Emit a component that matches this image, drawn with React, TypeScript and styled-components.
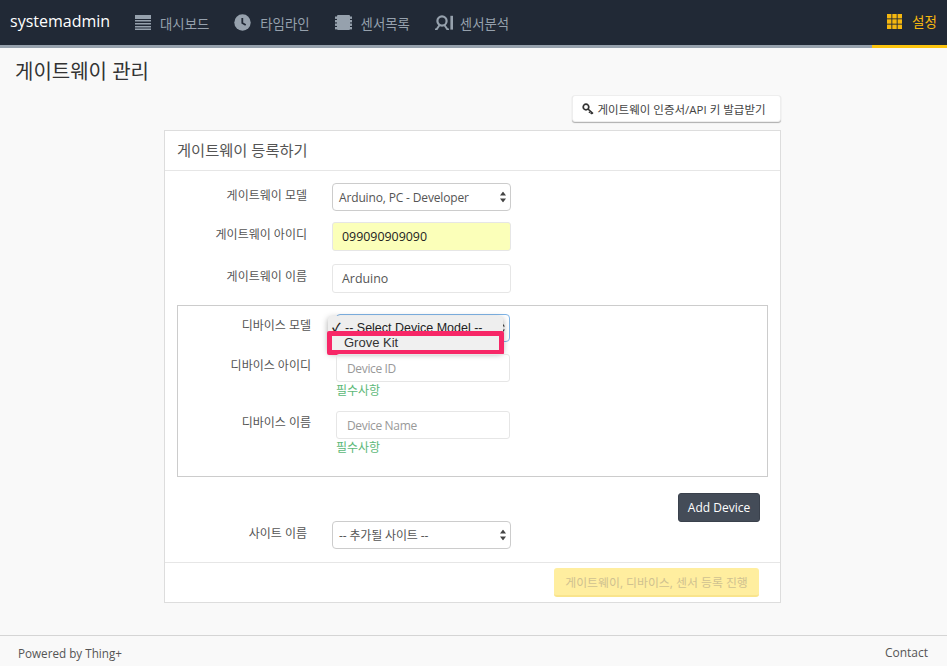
import React from "react";
import styled, { createGlobalStyle } from "styled-components";

const FONT = `"Open Sans", "Noto Sans CJK KR", sans-serif`;
const POPUP_FONT = `"Liberation Sans", "Noto Sans CJK KR", sans-serif`;

const GlobalStyle = createGlobalStyle`
  html, body { margin: 0; padding: 0; }
  body {
    background: #f9f9f9;
    font-family: ${FONT};
    color: #333;
    height: 666px;
    overflow: hidden;
  }
  * { box-sizing: border-box; }
`;

const DashIcon = () => (
  <svg width="16" height="15" viewBox="0 0 16 15" fill="currentColor">
    <rect x="0" y="0" width="16" height="4" />
    <rect x="0" y="5" width="16" height="1.5" />
    <rect x="0" y="8" width="16" height="1.5" />
    <rect x="0" y="11" width="16" height="1.5" />
    <rect x="0" y="13.5" width="16" height="1.5" />
  </svg>
);

const ClockIcon = () => (
  <svg width="17" height="17" viewBox="0 0 17 17">
    <circle cx="8.5" cy="8.5" r="8.2" fill="currentColor" />
    <path d="M8.3 4v5l3.4 2" fill="none" stroke="#212936" strokeWidth="1.8" />
  </svg>
);

const ChipIcon = () => (
  <svg width="17" height="15" viewBox="0 0 17 15" fill="currentColor">
    <rect x="2" y="0" width="13" height="15" rx="1" />
    <rect x="0" y="1.5" width="2" height="2.4" />
    <rect x="0" y="5" width="2" height="2.4" />
    <rect x="0" y="8.5" width="2" height="2.4" />
    <rect x="0" y="12" width="2" height="2.4" />
    <rect x="15" y="1.5" width="2" height="2.4" />
    <rect x="15" y="5" width="2" height="2.4" />
    <rect x="15" y="8.5" width="2" height="2.4" />
    <rect x="15" y="12" width="2" height="2.4" />
  </svg>
);

const AnalyticsSvg = styled.svg`
  margin-right: -2px;
`;

const AnalyticsIcon = () => (
  <AnalyticsSvg width="18" height="15" viewBox="0 0 18 15" fill="none" stroke="currentColor">
    <circle cx="7" cy="6" r="4.6" strokeWidth="2.2" />
    <path d="M4.6 10 1.6 14.4H0M9.4 10l3 4.4H14" strokeWidth="1.9" />
    <rect x="15.4" y="0.8" width="2.6" height="13.8" fill="currentColor" stroke="none" />
  </AnalyticsSvg>
);

const GridIcon = () => (
  <svg width="15" height="15" viewBox="0 0 15 15" fill="currentColor">
    {[0, 5.3, 10.6].flatMap((y) =>
      [0, 5.3, 10.6].map((x) => (
        <rect key={`${x}-${y}`} x={x} y={y} width="4.4" height="4.4" />
      ))
    )}
  </svg>
);

const KeyIcon = () => (
  <svg width="12" height="12" viewBox="0 0 12 12" fill="none" stroke="#333">
    <circle cx="4" cy="4" r="2.8" strokeWidth="1.7" />
    <path d="M6 6l5 4.6M8.4 8.2 7 9.7M10 9.6 8.8 11" strokeWidth="1.6" />
  </svg>
);

const SelectArrows = () => (
  <ArrowsSvg width="6" height="11" viewBox="0 0 6 11" fill="currentColor">
    <path d="M3 0l3 4H0zM3 11 0 7h6z" />
  </ArrowsSvg>
);

const ArrowsSvg = styled.svg`
  position: absolute;
  right: 4px;
  top: 50%;
  transform: translateY(-50%);
  color: #444;
`;

const NAV_ITEMS = [
  { label: "대시보드", icon: <DashIcon /> },
  { label: "타임라인", icon: <ClockIcon /> },
  { label: "센서목록", icon: <ChipIcon /> },
  { label: "센서분석", icon: <AnalyticsIcon /> },
];

export default function App() {
  return (
    <Page>
      <GlobalStyle />
      <NavBar>
        <Brand>systemadmin</Brand>
        <NavList>
          {NAV_ITEMS.map((item) => (
            <NavItem key={item.label}>
              {item.icon}
              <span>{item.label}</span>
            </NavItem>
          ))}
        </NavList>
        <SettingsItem>
          <GridIcon />
          <span>설정</span>
        </SettingsItem>
      </NavBar>

      <Content>
        <PageTitle>게이트웨이 관리</PageTitle>
        <Toolbar>
          <KeyButton>
            <KeyIcon />
            게이트웨이 인증서/API 키 발급받기
          </KeyButton>
        </Toolbar>

        <Panel>
          <PanelHeading>게이트웨이 등록하기</PanelHeading>
          <PanelBody>
            <Row $height={39}>
              <RowLabel>게이트웨이 모델</RowLabel>
              <SelectBox>
                Arduino, PC - Developer
                <SelectArrows />
              </SelectBox>
            </Row>
            <Row $height={42}>
              <RowLabel>게이트웨이 아이디</RowLabel>
              <TextBox $fill="#fbffb9" $color="#222">099090909090</TextBox>
            </Row>
            <Row $height={41}>
              <RowLabel>게이트웨이 이름</RowLabel>
              <TextBox $color="#555">Arduino</TextBox>
            </Row>

            <DeviceBox>
              <DeviceRow $height={40}>
                <DeviceLabel>디바이스 모델</DeviceLabel>
                <DeviceField>
                  <FocusedSelect>
                    <SelectArrows />
                  </FocusedSelect>
                  <Popup>
                    <PopupOption>
                      <Check>✓</Check>-- Select Device Model --
                    </PopupOption>
                    <Highlight>
                      <HighlightInner>Grove Kit</HighlightInner>
                    </Highlight>
                  </Popup>
                </DeviceField>
              </DeviceRow>
              <DeviceRow $height={57}>
                <DeviceLabel>디바이스 아이디</DeviceLabel>
                <DeviceField>
                  <DeviceInput>Device ID</DeviceInput>
                  <Required>필수사항</Required>
                </DeviceField>
              </DeviceRow>
              <DeviceRow $height={57}>
                <DeviceLabel>디바이스 이름</DeviceLabel>
                <DeviceField>
                  <DeviceInput>Device Name</DeviceInput>
                  <Required>필수사항</Required>
                </DeviceField>
              </DeviceRow>
            </DeviceBox>

            <AddRow>
              <AddButton>Add Device</AddButton>
            </AddRow>

            <Row $height={40}>
              <RowLabel>사이트 이름</RowLabel>
              <SelectBox>
                -- 추가될 사이트 --
                <SelectArrows />
              </SelectBox>
            </Row>
          </PanelBody>
          <PanelFooter>
            <SubmitButton>게이트웨이, 디바이스, 센서 등록 진행</SubmitButton>
          </PanelFooter>
        </Panel>
      </Content>

      <Footer>
        <PoweredBy>Powered by Thing+</PoweredBy>
        <span>Contact</span>
      </Footer>
    </Page>
  );
}

const Page = styled.div`
  width: 947px;
  height: 666px;
  display: flex;
  flex-direction: column;
`;

const NavBar = styled.nav`
  height: 48px;
  flex: none;
  display: flex;
  align-items: stretch;
  background: #212936;
  border-bottom: 3px solid #96a1ad;
  padding-left: 10px;
`;

const Brand = styled.div`
  font-size: 16px;
  line-height: 43px;
  color: #fff;
  width: 125px;
`;

const NavList = styled.div`
  display: flex;
  gap: 25px;
  flex: 1;
`;

const NavItem = styled.div`
  display: flex;
  align-items: center;
  gap: 9px;
  color: #96a1ad;
  font-size: 13.4px;
  height: 45px;
`;

const SettingsItem = styled.div`
  display: flex;
  align-items: center;
  gap: 10px;
  width: 75px;
  height: 48px;
  padding: 0 0 3px 15px;
  color: #f5b70f;
  font-size: 13.5px;
  border-bottom: 3px solid #fcc40f;
`;

const Content = styled.main`
  flex: 1;
  display: flex;
  flex-direction: column;
  padding-left: 164px;
`;

const PageTitle = styled.h1`
  margin: 10px 0 0 -149px;
  height: 37px;
  font-size: 20px;
  line-height: 28px;
  font-weight: 400;
  color: #333;
`;

const Toolbar = styled.div`
  width: 617px;
  height: 35px;
  display: flex;
  justify-content: flex-end;
`;

const KeyButton = styled.div`
  width: 209px;
  height: 27px;
  display: flex;
  align-items: center;
  justify-content: center;
  gap: 3px;
  padding-right: 5px;
  background: #fff;
  border-radius: 3px;
  box-shadow: 0 1px 1px rgba(0, 0, 0, 0.3);
  border: 1px solid #eee;
  font-size: 11.5px;
  color: #444;
`;

const Panel = styled.section`
  width: 617px;
  height: 473px;
  background: #fff;
  border: 1px solid #ddd;
  display: flex;
  flex-direction: column;
`;

const PanelHeading = styled.div`
  height: 40px;
  flex: none;
  padding-left: 12px;
  border-bottom: 1px solid #e6e6e6;
  font-size: 15.3px;
  line-height: 39px;
  color: #555;
`;

const PanelBody = styled.div`
  flex: 1;
  padding: 12px 12px 0;
`;

const Row = styled.div<{ $height: number }>`
  display: flex;
  height: ${(p) => p.$height}px;
  align-items: flex-start;
`;

const RowLabel = styled.div`
  width: 130px;
  text-align: right;
  font-size: 12px;
  line-height: 26px;
  color: #555;
  margin-right: 25px;
`;

const SelectBox = styled.div`
  position: relative;
  width: 179px;
  height: 28px;
  padding-left: 6px;
  background: #fff;
  border: 1px solid #ccc;
  border-radius: 4px;
  font-size: 12px;
  letter-spacing: -0.15px;
  line-height: 27px;
  color: #555;
`;

const TextBox = styled.div<{ $fill?: string; $color: string }>`
  width: 179px;
  height: 29px;
  padding-left: 9px;
  background: ${(p) => p.$fill || "#fff"};
  border: 1px solid #e6e6e6;
  border-radius: 3px;
  font-size: 12.4px;
  line-height: 28px;
  color: ${(p) => p.$color};
`;

const DeviceBox = styled.div`
  width: 591px;
  height: 172px;
  border: 1px solid #ccc;
  padding-top: 8px;
`;

const DeviceRow = styled.div<{ $height: number }>`
  display: flex;
  height: ${(p) => p.$height}px;
`;

const DeviceLabel = styled.div`
  width: 133px;
  text-align: right;
  font-size: 12px;
  line-height: 24px;
  color: #555;
  margin-right: 25px;
`;

const DeviceField = styled.div`
  position: relative;
  width: 174px;
`;

const FocusedSelect = styled.div`
  position: relative;
  width: 174px;
  height: 28px;
  border: 1px solid #7fb4e6;
  border-radius: 4px;
  background: #fff;
`;

const Popup = styled.div`
  position: absolute;
  left: -8px;
  top: 2px;
  width: 175px;
  height: 36px;
  background: #eee;
  border-radius: 4px;
  box-shadow: 0 2px 6px rgba(0, 0, 0, 0.35);
  font-family: ${POPUP_FONT};
  font-size: 12.5px;
  color: #222;
`;

const PopupOption = styled.div`
  display: flex;
  height: 18px;
  line-height: 24px;
  overflow: hidden;
  padding-left: 4px;
`;

const Check = styled.span`
  width: 13px;
  flex: none;
  font-size: 12px;
  font-weight: 700;
`;

const Highlight = styled.div`
  position: absolute;
  left: -1px;
  top: 15px;
  width: 177px;
  height: 24px;
  border: 5px solid #f72767;
  border-radius: 2px;
`;

const HighlightInner = styled.div`
  height: 14px;
  padding-left: 12px;
  background: #f0f0f0;
  font-size: 13px;
  line-height: 14px;
  color: #333;
`;

const DeviceInput = styled.div`
  width: 174px;
  height: 28px;
  padding-left: 10px;
  border: 1px solid #e6e6e6;
  border-radius: 3px;
  font-size: 12px;
  letter-spacing: -0.35px;
  line-height: 27px;
  color: #999;
`;

const Required = styled.div`
  font-size: 12px;
  line-height: 18px;
  color: #5cb878;
`;

const AddRow = styled.div`
  height: 44px;
  padding: 16px 8px 0 0;
  display: flex;
  justify-content: flex-end;
`;

const AddButton = styled.div`
  width: 82px;
  height: 29px;
  background: #444c58;
  border: 1px solid #3a414c;
  border-radius: 3px;
  color: #fff;
  font-size: 12px;
  line-height: 27px;
  text-align: center;
`;

const PanelFooter = styled.div`
  height: 40px;
  flex: none;
  border-top: 1px solid #e6e6e6;
  padding: 5px 21px 0 0;
  display: flex;
  justify-content: flex-end;
`;

const SubmitButton = styled.div`
  width: 205px;
  height: 29px;
  background: #ffee9f;
  border-bottom: 2px solid #f9e48c;
  border-radius: 3px;
  color: #cfc190;
  font-size: 11.9px;
  line-height: 28px;
  text-align: center;
`;

const Footer = styled.footer`
  height: 31px;
  flex: none;
  border-top: 1px solid #d5d5d5;
  display: flex;
  justify-content: space-between;
  padding: 7px 19px 0 18px;
  font-size: 12px;
  line-height: 20px;
  color: #555;
`;

const PoweredBy = styled.span`
  font-size: 11.7px;
`;
